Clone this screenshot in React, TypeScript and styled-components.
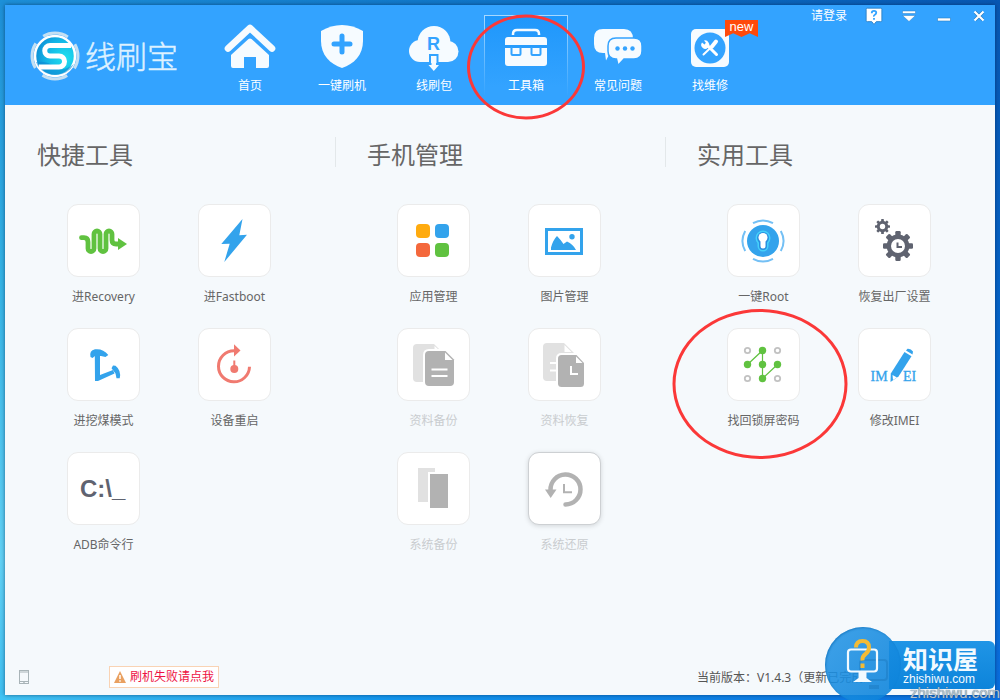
import React from "react";
import styled, { createGlobalStyle, css } from "styled-components";

const BLUE = "#33a3ff";
const SKY = "#33a3ec";
const GREEN = "#60c240";
const SLATE = "#5f6370";
const GRAY = "#b2b2b2";
const PALE = "#e1e1e1";
const SANS = `"Noto Sans", "Noto Sans CJK SC", sans-serif`;

const GlobalStyle = createGlobalStyle`
  * { box-sizing: border-box; }
  body { margin: 0; font-family: ${SANS}; font-size: 12px; line-height: 16px; color: #666; }
  button { font: inherit; color: inherit; background: none; border: 0; padding: 0; cursor: pointer; }
  svg { display: block; }
`;

const Desktop = styled.div`
  position: relative;
  display: flex;
  min-height: 100vh;
  padding: 5px;
  overflow: hidden;
  background:
    linear-gradient(90deg, #1d90d8, #0d6fc4 60%, #0857b2) top / 100% 5px no-repeat,
    linear-gradient(90deg, #42c4f4, #1296ee 40%, #0a6fe0) bottom / 100% 5px no-repeat,
    linear-gradient(180deg, #1d90d8, #35b4e6 40%, #62d2f6 80%, #3fc0f2) left / 5px 100% no-repeat,
    linear-gradient(180deg, #0857b2, #0566cc 50%, #0a6fe0) right / 5px 100% no-repeat;
`;

const Window = styled.div`
  flex: 1;
  display: flex;
  flex-direction: column;
  background: #f5f9fc;
  box-shadow: 0 0 4px rgba(0, 30, 70, 0.6);
`;

const Header = styled.header`
  position: relative;
  z-index: 1;
  display: flex;
  height: 100px;
  padding-left: 25px;
  color: #fff;
  background: ${BLUE};
`;

const Brand = styled.div`
  display: flex;
  align-items: center;
  gap: 5px;
  width: 178px;
  padding-top: 2px;
  color: #e2f4ff;
  font-size: 31px;
  font-weight: 300;
  line-height: 40px;
  white-space: nowrap;
  -webkit-text-stroke: 0.5px #d4edff;
`;

const Nav = styled.nav`
  display: flex;
  gap: 8px;
  padding-top: 10px;
`;

const NavItem = styled.button<{ $active?: boolean }>`
  position: relative;
  display: flex;
  flex-direction: column;
  align-items: center;
  gap: 6px;
  width: 84px;
  height: 80px;
  padding-top: 6px;
  border: 1px solid transparent;
  ${(p) =>
    p.$active &&
    css`
      background: linear-gradient(180deg, #1f97fb, ${BLUE} 90%) padding-box;
      border-bottom: 0;
      border-image: linear-gradient(180deg, #a8d8ff, rgba(168, 216, 255, 0)) 1;
    `}
`;

const NewBadge = styled.span`
  position: absolute;
  left: 56px;
  top: 4px;
  width: 33px;
  height: 17px;
  font-size: 13px;
  line-height: 13px;
  font-family: "Liberation Sans", sans-serif;
  text-align: center;
  background: #ff4a0b;
  clip-path: polygon(0 0, 100% 0, 100% 100%, 75% 78%, 50% 100%, 25% 78%, 0 100%);
`;

const Ring = styled.span<{ $w: number; $h: number }>`
  position: absolute;
  left: 50%;
  top: 50%;
  width: ${(p) => p.$w}px;
  height: ${(p) => p.$h}px;
  border: 3px solid #fb3838;
  border-radius: 50%;
  transform: translate(-50%, -50%);
  pointer-events: none;
`;

const NavRing = styled(Ring)`
  top: 51px;
`;

const TileRing = styled(Ring)`
  left: 32px;
  top: 55px;
`;

const Controls = styled.div`
  display: flex;
  gap: 5px;
  height: 22px;
  margin-left: auto;
  padding-right: 1px;
`;

const Login = styled.button`
  margin-right: 7px;
`;

const ControlButton = styled.button`
  display: flex;
  align-items: center;
  justify-content: center;
  width: 30px;
`;

const Sections = styled.main`
  flex: 1;
  display: grid;
  grid-template-columns: repeat(3, 1fr);
  padding-top: 32px;
`;

const SectionTitle = styled.h2`
  margin: 0 0 33px;
  padding: 2px 0 0 32px;
  font-size: 24px;
  font-weight: 400;
  line-height: 32px;
  section + section > & {
    background: linear-gradient(#e3e8ea, #e3e8ea) left top / 1px 30px no-repeat;
  }
`;

const Tiles = styled.div`
  display: grid;
  grid-template-columns: 131px 131px;
  row-gap: 23px;
  padding-left: 33px;
`;

const ToolButton = styled.button<{ $muted?: boolean }>`
  display: flex;
  flex-direction: column;
  align-items: center;
  gap: 12px;
  color: ${(p) => (p.$muted ? "#c9cccf" : "#666")};
`;

const Tile = styled.span<{ $raised?: boolean }>`
  position: relative;
  width: 73px;
  height: 73px;
  border: 1px solid ${(p) => (p.$raised ? "#cdd0d3" : "#ebebeb")};
  border-radius: 11px;
  background: #fff;
  box-shadow: ${(p) => (p.$raised ? "0 1px 5px rgba(0,0,0,.14)" : "none")};
`;

const Footer = styled.footer`
  display: grid;
  grid-template-columns: 2fr 1fr;
  align-items: center;
  padding-bottom: 7px;
`;

const FooterLeft = styled.div`
  display: flex;
  align-items: center;
  gap: 80px;
  padding-left: 14px;
`;

const AlertLink = styled.a`
  display: flex;
  align-items: center;
  gap: 4px;
  height: 22px;
  padding: 0 4px;
  border: 1px solid #f9d3b4;
  background: #fff;
  color: #ee1244;
  text-decoration: none;
`;

const Version = styled.div`
  padding: 2px 0 0 32px;
  color: #555;
  white-space: nowrap;
`;

const Watermark = styled.div`
  position: absolute;
  z-index: 2;
  right: 5px;
  bottom: 0;
  display: flex;
  width: 170px;
  height: 73px;
  overflow: hidden;
  pointer-events: none;
`;

const WatermarkDisc = styled.div`
  position: relative;
  flex: none;
  width: 76px;
  height: 76px;
  border-radius: 50%;
  background: linear-gradient(135deg, rgba(38, 150, 230, 0.88), rgba(10, 130, 218, 0.9));
  box-shadow: inset 1px 1px 2px rgba(11, 106, 180, 0.6);
`;

const WatermarkPlate = styled.div`
  flex: 1;
  height: 48px;
  margin: 14px 0 0 -12px;
  padding: 0 0 0 14px;
  border-radius: 0 6px 6px 0;
  background: linear-gradient(180deg, #2095e6, #0d84da);
  color: #f2faff;
  white-space: nowrap;
`;

const WatermarkName = styled.div`
  font-family: "Noto Sans CJK SC", sans-serif;
  font-size: 25px;
  font-weight: 700;
  line-height: 34px;
`;

const WatermarkSite = styled.div`
  font-family: "Liberation Sans", sans-serif;
  font-size: 12px;
  line-height: 9px;
`;

const SiteCaption = styled.div`
  position: absolute;
  z-index: 3;
  right: 0;
  bottom: 0;
  font-family: "Liberation Sans", sans-serif;
  font-size: 15px;
  line-height: 14px;
  color: #b4c4d2;
  text-shadow: 0 0 1px #456;
`;

/* ---------- header drawings ---------- */

const BrandMark = () => (
  <svg width="50" height="50" viewBox="0 0 50 50" fill="none" aria-hidden="true">
    <defs>
      <radialGradient id="disc" cx=".75" cy=".55" r=".8">
        <stop offset="0" stopColor="#1fe0ee" />
        <stop offset=".6" stopColor="#12b4e6" />
        <stop offset="1" stopColor="#0d86d2" />
      </radialGradient>
    </defs>
    <circle cx="25" cy="25" r="23" stroke="#c4dff2" strokeWidth="3" strokeDasharray="26 10.1" strokeDashoffset="13" />
    <circle cx="25" cy="25" r="20" fill="url(#disc)" stroke="#fff" strokeWidth="2.5" />
    <path d="M6 31 Q18 30 25 36 T44 33 A20 20 0 0 1 25 44 A20 20 0 0 1 6 31Z" fill="#0d86d2" opacity=".55" />
    <path d="M41 14.500 H20 a5 5 0 0 0 0 10.500 H29 a5.500 5.500 0 0 1 0 11 H9" stroke="#fff" strokeWidth="5" />
  </svg>
);

const NavSvg = ({ children }: { children: React.ReactNode }) => (
  <svg width="52" height="50" viewBox="0 0 52 50" fill="#f6fbff" aria-hidden="true">
    {children}
  </svg>
);

const HomeIcon = () => (
  <NavSvg>
    <path d="M4 26.500 L26 6 L48 26.500" fill="none" stroke="#f6fbff" strokeWidth="6.600" strokeLinecap="round" strokeLinejoin="round" />
    <path d="M7 33 L24.500 17 q1.500-1 3 0 L45 33 V44 q0 2-2 2 H32 V35 H20 V46 H9 q-2 0-2-2Z" />
  </NavSvg>
);

const ShieldIcon = () => (
  <NavSvg>
    <path d="M5 9 Q15 3 26 3 Q37 3 47 9 V19 C47 33 38 42 26 46 C14 42 5 33 5 19Z" />
    <path d="M26 14 V30 M18 22 H34" stroke={BLUE} strokeWidth="5" strokeLinecap="round" />
  </NavSvg>
);

const CloudIcon = () => (
  <NavSvg>
    <circle cx="26" cy="20.500" r="16.500" />
    <circle cx="12" cy="29" r="11" />
    <circle cx="40" cy="29.500" r="10.500" />
    <rect x="12" y="24" width="28" height="16" />
    <text x="25.500" y="28" textAnchor="middle" fontFamily="Liberation Sans, sans-serif" fontWeight="700" fontSize="18" fill={BLUE}>R</text>
    <path d="M22 41 V33 H29.500 V41" fill="#f6fbff" stroke={BLUE} strokeWidth="2" />
    <path d="M23.500 35 H28 V43 H31 L25.800 49 L20.500 43 H23.500Z" />
  </NavSvg>
);

const ToolboxIcon = () => (
  <NavSvg>
    <path d="M13 13 V12 q0-4 4-4 H35 q4 0 4 4 V13" fill="none" stroke="#f6fbff" strokeWidth="2.500" />
    <path d="M5 23 V18 q0-3 3-3 H44 q3 0 3 3 V23Z" />
    <path d="M5 26 H47 V41 q0 3-3 3 H8 q-3 0-3-3Z" />
    <g fill="none" stroke={BLUE} strokeWidth="2">
      <path d="M11.500 25 V32 q0 1 1 1 H19.500 q1 0 1-1 V25" />
      <path d="M31.500 25 V32 q0 1 1 1 H39.500 q1 0 1-1 V25" />
    </g>
  </NavSvg>
);

const ChatIcon = () => (
  <NavSvg>
    <path d="M11 7 H32 q9 0 9 10 V22 q0 9-9 9 H18 L14 38.500 L13 31 H11 q-9 0-9-9 V16 q0-9 9-9Z" />
    <path d="M24 16 H42 q8 0 8 8 V29 q0 8-8 8 H32 L26 43.500 L24.500 37 H24 q-8 0-8-8 V24 q0-8 8-8Z" stroke={BLUE} strokeWidth="1.500" />
    <g fill={BLUE}>
      <circle cx="25.500" cy="26.500" r="2.200" />
      <circle cx="33" cy="26.500" r="2.200" />
      <circle cx="40.500" cy="26.500" r="2.200" />
    </g>
  </NavSvg>
);

const RepairIcon = () => (
  <NavSvg>
    <rect x="7" y="7" width="38" height="38" rx="5" />
    <circle cx="26" cy="26" r="15.500" fill={BLUE} />
    <path d="M22.500 22.500 L32.500 32.500" stroke="#fff" strokeWidth="3" strokeLinecap="round" />
    <path d="M20 18.500 L22 21 L20.500 22.500 L18 20.500 A4 4 0 1 0 24.500 20.500 A4 4 0 0 0 20 18.500Z" fill="#fff" />
    <path d="M28 24.500 L32 19.500" stroke="#fff" strokeWidth="4" strokeLinecap="round" />
    <path d="M28.500 24 L19.500 32.500" stroke="#fff" strokeWidth="2" strokeLinecap="round" />
  </NavSvg>
);

/* ---------- tool drawings ---------- */

const ToolSvg = ({ children }: { children: React.ReactNode }) => (
  <svg width="71" height="71" viewBox="1 1 71 71" fill="none" aria-hidden="true">
    {children}
  </svg>
);

const RecoveryIcon = () => (
  <ToolSvg>
    <path d="M14.500 33.700 H17 Q21 33.700 21 38 V44.500 a3 3 0 0 0 6 0 V30 a3 3 0 0 1 6 0 V44.500 a3 3 0 0 0 6 0 V30 a3 3 0 0 1 6 0 V36 q0 4 4 4 h3" stroke={GREEN} strokeWidth="4.800" strokeLinecap="round" />
    <path d="M51 34 L60 40 L51 46Z" fill={GREEN} />
  </ToolSvg>
);

const BoltIcon = () => (
  <ToolSvg>
    <path d="M44.500 15 L41.300 31.300 L49 30.700 L26.300 58 L31.700 39.700 L23.300 40Z" fill={SKY} />
  </ToolSvg>
);

const PickIcon = () => (
  <ToolSvg>
    <path d="M27.800 26 H33 V47 L46 42 L47.500 45.500 L31 53 H28Z" fill={SKY} />
    <path d="M23.500 29 Q22 22.500 28 21.300 Q36 20.300 41.300 27 L38.500 29 L34 28 H28 L25.500 30Z" fill={SKY} />
    <path d="M44.500 40.300 L46 37.500 L48.500 37.800 Q54.500 42.500 52.700 50.300 H49.500 L48.500 45.500Z" fill={SKY} />
  </ToolSvg>
);

const RestartIcon = () => (
  <ToolSvg>
    <path d="M51.500 38.700 A15.500 15.500 0 1 1 36 22.800" stroke="#f07a70" strokeWidth="3" />
    <path d="M36 16.300 L42.500 22.400 L36 28.500Z" fill="#f07a70" />
    <circle cx="36.300" cy="41" r="4" fill="#f07a70" />
    <path d="M36.300 41 V32.500" stroke="#f07a70" strokeWidth="2" />
  </ToolSvg>
);

const ConsoleIcon = () => (
  <ToolSvg>
    <text x="13" y="45" fontFamily="Liberation Sans, sans-serif" fontWeight="700" fontSize="24" fill={SLATE}>{"C:\\_"}</text>
  </ToolSvg>
);

const AppsIcon = () => (
  <ToolSvg>
    <rect x="19" y="20" width="14" height="14" rx="4" fill="#ffab0f" />
    <rect x="38" y="20" width="14" height="14" rx="4" fill={SKY} />
    <rect x="19" y="39" width="14" height="14" rx="4" fill="#f4683c" />
    <rect x="38" y="39" width="14" height="14" rx="4" fill={GREEN} />
  </ToolSvg>
);

const PictureIcon = () => (
  <ToolSvg>
    <rect x="18.500" y="25.500" width="35" height="24" stroke={SKY} strokeWidth="3" />
    <path d="M23 46 V43.500 Q25 36 29 32 Q32 35 35.500 40 L39 37.500 Q45 40 48 46Z" fill={SKY} />
    <circle cx="44" cy="32.700" r="2.700" fill={SKY} />
  </ToolSvg>
);

const DataBackupIcon = () => (
  <ToolSvg>
    <path d="M20 16 H37 L44 23 V54 H20 q-4 0-4-4 V20 q0-4 4-4Z" fill={PALE} />
    <path d="M37.500 18 L42 22 H37.500Z" fill="#fff" />
    <path d="M32 23 H48.500 L57 31.500 V54 q0 4-4 4 H32 q-4 0-4-4 V27 q0-4 4-4Z" fill={GRAY} stroke="#fff" strokeWidth="4" paintOrder="stroke" />
    <path d="M48 24.500 V32 H55.500Z" fill="#fff" />
    <path d="M34.500 41.500 H50.500 M34.500 48 H50.500" stroke="#fff" strokeWidth="2" />
  </ToolSvg>
);

const DataRestoreIcon = () => (
  <ToolSvg>
    <path d="M19 15 H36 L46 25 V53 H19 q-4 0-4-4 V19 q0-4 4-4Z" fill={PALE} />
    <path d="M36.500 17 V24 H43.500Z" fill="#fff" />
    <path d="M22 35 H30 M22 42.500 H30" stroke="#fff" strokeWidth="2" />
    <path d="M33.500 27 H48.500 L56 35 V55.500 q0 3.500-3.500 3.500 H33.500 q-3.500 0-3.500-3.500 V30.500 q0-3.500 3.500-3.500Z" fill={GRAY} stroke="#fff" strokeWidth="4" paintOrder="stroke" />
    <path d="M48 28.500 V35 H54.500Z" fill="#fff" />
    <path d="M43 38 V46 H50" stroke="#fff" strokeWidth="2" />
  </ToolSvg>
);

const SystemBackupIcon = () => (
  <ToolSvg>
    <rect x="21" y="16" width="17" height="34" fill={PALE} />
    <rect x="33" y="22" width="18" height="34" fill={GRAY} stroke="#fff" strokeWidth="4" paintOrder="stroke" />
  </ToolSvg>
);

const SystemRestoreIcon = () => (
  <ToolSvg>
    <path d="M22.500 38 A15 15 0 1 1 37.500 52.500" stroke={GRAY} strokeWidth="4.500" strokeLinecap="round" />
    <path d="M17 37.500 H28.500 L22.700 46Z" fill={GRAY} />
    <path d="M36 32 V40.300 H44" stroke={GRAY} strokeWidth="2" />
  </ToolSvg>
);

const RootIcon = () => (
  <ToolSvg>
    <circle cx="36" cy="37" r="16" fill={SKY} />
    {[0, 90, 180, 270].map((a) => (
      <path key={a} d="M26 19.200 A20.500 20.500 0 0 1 46 19.200" stroke="#74c0f5" strokeWidth="2" transform={`rotate(${a} 36 37)`} />
    ))}
    <path d="M36 34 V42" stroke="#45d0fa" strokeWidth="11" strokeLinecap="round" />
    <circle cx="36" cy="34" r="7.500" fill="#45d0fa" />
    <path d="M36 34 V42" stroke="#2a8fe0" strokeWidth="8" strokeLinecap="round" />
    <circle cx="36" cy="34" r="6" fill="#2a8fe0" />
    <path d="M36 34 V42" stroke="#fff" strokeWidth="5" strokeLinecap="round" />
    <circle cx="36" cy="33.500" r="4.500" fill="#fff" />
  </ToolSvg>
);

const Gear = ({ cx, cy, r, hole }: { cx: number; cy: number; r: number; hole: number }) => (
  <g fill={SLATE}>
    {[0, 45, 90, 135, 180, 225, 270, 315].map((a) => (
      <rect key={a} x={cx - r * 0.18} y={cy - r} width={r * 0.36} height={r * 0.5} rx={r * 0.08} transform={`rotate(${a} ${cx} ${cy})`} />
    ))}
    <circle cx={cx} cy={cy} r={r * 0.76} />
    <circle cx={cx} cy={cy} r={hole} fill="#fff" />
  </g>
);

const FactoryIcon = () => (
  <ToolSvg>
    <Gear cx={24.5} cy={22.5} r={7.5} hole={2.7} />
    <Gear cx={40} cy={42} r={15} hole={7} />
    <path d="M39.500 38.500 V43 H44" stroke={SLATE} strokeWidth="2" />
  </ToolSvg>
);

const LockPatternIcon = () => (
  <ToolSvg>
    <path d="M20.500 36.500 L35.500 22.500 V50.500 L50.500 36.500" stroke={GREEN} strokeWidth="1.200" />
    {[[20.5, 22.5], [50.5, 22.5], [20.5, 50.5], [50.5, 50.5]].map(([x, y]) => (
      <circle key={`${x}-${y}`} cx={x} cy={y} r="2.700" stroke="#c2c2c2" strokeWidth="1.800" />
    ))}
    {[[35.5, 22.5], [20.5, 36.5], [35.5, 36.5], [50.5, 36.5], [35.5, 50.5]].map(([x, y]) => (
      <circle key={`${x}-${y}`} cx={x} cy={y} r="3.700" fill={GREEN} />
    ))}
  </ToolSvg>
);

const ImeiIcon = () => (
  <ToolSvg>
    <g fontFamily="Liberation Serif, serif" fontSize="14" fill={SKY} stroke={SKY} strokeWidth=".3">
      <text x="12.500" y="53">IM</text>
      <text x="45" y="53">EI</text>
    </g>
    <path d="M46.500 24 L53.500 28.200 L40.500 48.500 L32.500 54 L32.800 45.500Z" fill={SKY} />
    <path d="M34.500 47 L39 49.500 L35 52Z" fill="#fff" />
    <path d="M48 22.500 L49.500 20.800 Q53 20.500 55 23.500 L54.500 26.500Z" fill={SKY} />
  </ToolSvg>
);

/* ---------- data ---------- */

type NavEntry = { label: string; Icon: React.FC; active?: boolean; fresh?: boolean };

const navEntries: NavEntry[] = [
  { label: "首页", Icon: HomeIcon },
  { label: "一键刷机", Icon: ShieldIcon },
  { label: "线刷包", Icon: CloudIcon },
  { label: "工具箱", Icon: ToolboxIcon, active: true },
  { label: "常见问题", Icon: ChatIcon },
  { label: "找维修", Icon: RepairIcon, fresh: true },
];

type Tool = { label: string; Icon: React.FC; muted?: boolean; raised?: boolean; ringed?: boolean };

const sections: { title: string; tools: Tool[] }[] = [
  {
    title: "快捷工具",
    tools: [
      { label: "进Recovery", Icon: RecoveryIcon },
      { label: "进Fastboot", Icon: BoltIcon },
      { label: "进挖煤模式", Icon: PickIcon },
      { label: "设备重启", Icon: RestartIcon },
      { label: "ADB命令行", Icon: ConsoleIcon },
    ],
  },
  {
    title: "手机管理",
    tools: [
      { label: "应用管理", Icon: AppsIcon },
      { label: "图片管理", Icon: PictureIcon },
      { label: "资料备份", Icon: DataBackupIcon, muted: true },
      { label: "资料恢复", Icon: DataRestoreIcon, muted: true },
      { label: "系统备份", Icon: SystemBackupIcon, muted: true },
      { label: "系统还原", Icon: SystemRestoreIcon, muted: true, raised: true },
    ],
  },
  {
    title: "实用工具",
    tools: [
      { label: "一键Root", Icon: RootIcon },
      { label: "恢复出厂设置", Icon: FactoryIcon },
      { label: "找回锁屏密码", Icon: LockPatternIcon, ringed: true },
      { label: "修改IMEI", Icon: ImeiIcon },
    ],
  },
];

export default function App() {
  return (
    <Desktop>
      <GlobalStyle />
      <Window>
        <Header>
          <Brand>
            <BrandMark />
            <span>线刷宝</span>
          </Brand>
          <Nav>
            {navEntries.map(({ label, Icon, active, fresh }) => (
              <NavItem key={label} $active={active}>
                <Icon />
                <span>{label}</span>
                {fresh && <NewBadge>new</NewBadge>}
                {active && <NavRing $w={118} $h={105} />}
              </NavItem>
            ))}
          </Nav>
          <Controls>
            <Login>请登录</Login>
            <ControlButton aria-label="帮助">
              <svg width="18" height="18" viewBox="0 0 16 16">
                <path d="M2 1 H14 q1 0 1 1 V12 q0 1-1 1 H10 L8 15.500 L6 13 H2 q-1 0-1-1 V2 q0-1 1-1Z" fill="#fff" stroke="#2a7fc4" strokeWidth=".8" />
                <path d="M6 5.500 q0-2 2-2 t2 1.700 q0 1-1.200 1.700 T8 8.500 M8 9.800 V11.300" fill="none" stroke={BLUE} strokeWidth="1.600" />
              </svg>
            </ControlButton>
            <ControlButton aria-label="菜单">
              <svg width="14" height="12" viewBox="0 0 14 12" fill="#fff">
                <path d="M.5 1 H13.500 V3.500 H.5Z M.5 5.500 H13.500 L7 11.500Z" stroke="#2a7fc4" strokeWidth=".5" />
              </svg>
            </ControlButton>
            <ControlButton aria-label="最小化">
              <svg width="14" height="12" viewBox="0 0 14 12">
                <path d="M.5 8 H13.500 V11 H.5Z" fill="#fff" stroke="#2a7fc4" strokeWidth=".6" />
              </svg>
            </ControlButton>
            <ControlButton aria-label="关闭">
              <svg width="12" height="12" viewBox="0 0 12 12" fill="none">
                <path d="M2 2 L10 10 M10 2 L2 10" stroke="#2a7fc4" strokeWidth="3.400" />
                <path d="M1.500 1.500 L10.500 10.500 M10.500 1.500 L1.500 10.500" stroke="#fff" strokeWidth="2.200" />
              </svg>
            </ControlButton>
          </Controls>
        </Header>
        <Sections>
          {sections.map(({ title, tools }) => (
            <section key={title}>
              <SectionTitle>{title}</SectionTitle>
              <Tiles>
                {tools.map(({ label, Icon, muted, raised, ringed }) => (
                  <ToolButton key={label} $muted={muted}>
                    <Tile $raised={raised}>
                      <Icon />
                      {ringed && <TileRing $w={175} $h={150} />}
                    </Tile>
                    <span>{label}</span>
                  </ToolButton>
                ))}
              </Tiles>
            </section>
          ))}
        </Sections>
        <Footer>
          <FooterLeft>
            <svg width="10" height="14" viewBox="0 0 10 14" fill="none" aria-hidden="true">
              <rect x=".5" y=".5" width="9" height="13" stroke="#a9b4b8" />
              <path d="M0 2 H10 M0 11.500 H10" stroke="#a9b4b8" />
              <path d="M4 12.800 H6" stroke="#a9b4b8" />
            </svg>
            <AlertLink href="#">
              <svg width="12" height="12" viewBox="0 0 12 12" aria-hidden="true">
                <path d="M6 0 L12 12 H0Z" fill="#e9a060" />
                <path d="M6 4 V8 M6 9.300 V10.800" stroke="#fff" strokeWidth="1.500" />
              </svg>
              <span>刷机失败请点我</span>
            </AlertLink>
          </FooterLeft>
          <Version>当前版本：V1.4.3（更新已完成）</Version>
        </Footer>
      </Window>
      <Watermark>
        <WatermarkDisc>
          <svg width="76" height="76" viewBox="0 0 76 76" fill="none" aria-hidden="true">
            <g opacity=".18" stroke="#04508c" strokeWidth="2">
              <rect x="35" y="33" width="27" height="20" rx="3" />
              <path d="M44 60 H54" strokeWidth="4" />
            </g>
            <rect x="23" y="22.500" width="29" height="22" rx="3" stroke="#f2faff" strokeWidth="2.200" />
            <path d="M33.500 45 H41.500 V51 L47 55 H28 L33.500 51Z" fill="#f2faff" />
            <path d="M31 20.500 q0-6.500 6.500-6.500 t6.500 6.500 q0 4-3.500 6.500 t-3 6.500 M37.500 36.500 V41" stroke="#f3bb36" strokeWidth="4" />
          </svg>
        </WatermarkDisc>
        <WatermarkPlate>
          <WatermarkName>知识屋</WatermarkName>
          <WatermarkSite>zhishiwu.com</WatermarkSite>
        </WatermarkPlate>
      </Watermark>
      <SiteCaption>zhishiwu.com</SiteCaption>
    </Desktop>
  );
}
